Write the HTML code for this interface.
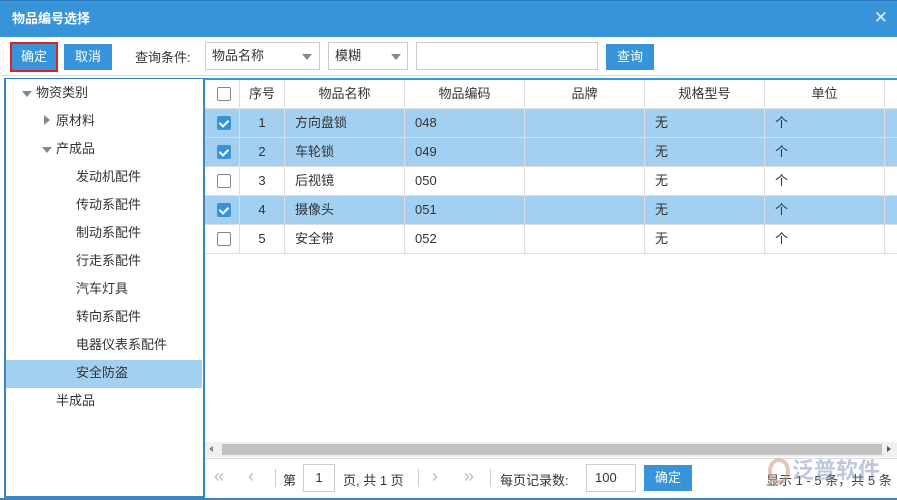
<!DOCTYPE html>
<html><head><meta charset="utf-8"><style>
*{margin:0;padding:0;box-sizing:border-box}
body{width:897px;height:500px;overflow:hidden;background:#fff;font-family:"Liberation Sans","Noto Sans CJK SC",sans-serif;font-size:13px;color:#333;position:relative}
.a{position:absolute}
.title{left:0;top:0;width:897px;height:37px;background:#3794d8;color:#fff;font-weight:bold;font-size:13px;line-height:36px;padding-left:12px;border-top:1px solid #2a7cc0}
.btn{background:#3794d8;color:#fff;text-align:center;line-height:26px;height:26px}
.sel{border:1px solid #ccc;height:28px;line-height:26px;padding-left:6px;background:#fff}
.tri{position:absolute;width:0;height:0;border-left:5px solid transparent;border-right:5px solid transparent;border-top:6px solid #777}
.tree div{position:absolute;height:28px;line-height:28px}
.grid{left:205px;top:78px;width:692px;height:365px;border-top:2px solid #3794d8}
.row{position:absolute;left:0;width:692px;height:29px;border-bottom:1px solid #ddd}
.row span{position:absolute;top:0;height:28px;line-height:28px;border-right:1px solid #ddd}
.cb{position:absolute;left:12px;top:7px;width:14px;height:14px;border:1px solid #888;background:#fff;border-radius:2px}
.cb.on{background:#3794d8;border-color:#3794d8}
.cb.on::after{content:"";position:absolute;left:3px;top:1px;width:4px;height:7px;border:solid #fff;border-width:0 2px 2px 0;transform:rotate(45deg)}
.hl{background:#a3d0f1}
.pg{color:#bbb;font-size:18px}
</style></head><body>
<div class="a title">物品编号选择</div>
<div class="a" style="right:9px;top:8px;color:#d8ecfa;font-size:17px">✕</div>
<div class="a btn" style="left:12px;top:44px;width:44px;outline:2px solid #e02020;outline-offset:0">确定</div>
<div class="a btn" style="left:64px;top:44px;width:48px">取消</div>
<div class="a" style="left:135px;top:47px">查询条件:</div>
<div class="a sel" style="left:205px;top:42px;width:115px">物品名称<div class="tri" style="left:96px;top:11px;border-top-color:#888"></div></div>
<div class="a sel" style="left:328px;top:42px;width:80px">模糊<div class="tri" style="left:62px;top:11px;border-top-color:#888"></div></div>
<div class="a sel" style="left:416px;top:42px;width:182px"></div>
<div class="a btn" style="left:606px;top:44px;width:48px">查询</div>
<div class="a" style="left:0;top:75px;width:897px;height:1px;background:#ddd"></div>
<div class="a" style="left:4px;top:78px;width:201px;height:420px;border:2px solid #3a86c4;border-top:1px solid #3a86c4"></div>
<div class="a hl" style="left:6px;top:360px;width:196px;height:28px"></div>
<div class="tree">
<div class="tri" style="left:22px;top:91px;border-top-color:#888"></div>
<div style="left:36px;top:79px">物资类别</div>
<div style="left:44px;top:115px;width:0;height:0;border-top:5px solid transparent;border-bottom:5px solid transparent;border-left:6px solid #888"></div>
<div style="left:56px;top:107px">原材料</div>
<div class="tri" style="left:42px;top:147px;border-top-color:#888"></div>
<div style="left:56px;top:135px">产成品</div>
<div style="left:76px;top:163px">发动机配件</div>
<div style="left:76px;top:191px">传动系配件</div>
<div style="left:76px;top:219px">制动系配件</div>
<div style="left:76px;top:247px">行走系配件</div>
<div style="left:76px;top:275px">汽车灯具</div>
<div style="left:76px;top:303px">转向系配件</div>
<div style="left:76px;top:331px">电器仪表系配件</div>
<div style="left:76px;top:359px">安全防盗</div>
<div style="left:56px;top:387px">半成品</div>
</div>
<div class="a grid">
<div class="row" style="top:0;background:#fff">
<span style="left:0;width:35px"><i class="cb" style="top:7px"></i></span>
<span style="left:35px;width:45px;text-align:center">序号</span>
<span style="left:80px;width:120px;text-align:center">物品名称</span>
<span style="left:200px;width:120px;text-align:center">物品编码</span>
<span style="left:320px;width:120px;text-align:center">品牌</span>
<span style="left:440px;width:120px;text-align:center">规格型号</span>
<span style="left:560px;width:120px;text-align:center">单位</span>
</div>
<div class="row hl" style="top:29px"><span style="left:0;width:35px"><i class="cb on"></i></span><span style="left:35px;width:45px;text-align:center">1</span><span style="left:80px;width:120px;padding-left:10px">方向盘锁</span><span style="left:200px;width:120px;padding-left:10px">048</span><span style="left:320px;width:120px"></span><span style="left:440px;width:120px;padding-left:10px">无</span><span style="left:560px;width:120px;padding-left:10px">个</span></div>
<div class="row hl" style="top:58px"><span style="left:0;width:35px"><i class="cb on"></i></span><span style="left:35px;width:45px;text-align:center">2</span><span style="left:80px;width:120px;padding-left:10px">车轮锁</span><span style="left:200px;width:120px;padding-left:10px">049</span><span style="left:320px;width:120px"></span><span style="left:440px;width:120px;padding-left:10px">无</span><span style="left:560px;width:120px;padding-left:10px">个</span></div>
<div class="row" style="top:87px"><span style="left:0;width:35px"><i class="cb"></i></span><span style="left:35px;width:45px;text-align:center">3</span><span style="left:80px;width:120px;padding-left:10px">后视镜</span><span style="left:200px;width:120px;padding-left:10px">050</span><span style="left:320px;width:120px"></span><span style="left:440px;width:120px;padding-left:10px">无</span><span style="left:560px;width:120px;padding-left:10px">个</span></div>
<div class="row hl" style="top:116px"><span style="left:0;width:35px"><i class="cb on"></i></span><span style="left:35px;width:45px;text-align:center">4</span><span style="left:80px;width:120px;padding-left:10px">摄像头</span><span style="left:200px;width:120px;padding-left:10px">051</span><span style="left:320px;width:120px"></span><span style="left:440px;width:120px;padding-left:10px">无</span><span style="left:560px;width:120px;padding-left:10px">个</span></div>
<div class="row" style="top:145px"><span style="left:0;width:35px"><i class="cb"></i></span><span style="left:35px;width:45px;text-align:center">5</span><span style="left:80px;width:120px;padding-left:10px">安全带</span><span style="left:200px;width:120px;padding-left:10px">052</span><span style="left:320px;width:120px"></span><span style="left:440px;width:120px;padding-left:10px">无</span><span style="left:560px;width:120px;padding-left:10px">个</span></div>
</div>
<div class="a" style="left:205px;top:442px;width:692px;height:15px;background:#f0f0f0"></div>
<div class="a" style="left:222px;top:444px;width:660px;height:11px;background:#c1c1c1"></div>
<div class="a" style="left:209px;top:446px;border-top:3px solid transparent;border-bottom:3px solid transparent;border-right:4px solid #888"></div>
<div class="a" style="left:887px;top:446px;border-top:3px solid transparent;border-bottom:3px solid transparent;border-left:4px solid #555"></div>
<div class="a" style="left:205px;top:458px;width:692px;height:1px;background:#ddd"></div>
<div class="a pg" style="left:214px;top:466px">«</div>
<div class="a pg" style="left:248px;top:466px">‹</div>
<div class="a" style="left:275px;top:469px;width:1px;height:18px;background:#ccc"></div>
<div class="a" style="left:283px;top:470px">第</div>
<div class="a" style="left:303px;top:464px;width:32px;height:28px;border:1px solid #ccc;text-align:center;line-height:26px">1</div>
<div class="a" style="left:343px;top:470px">页, 共 1 页</div>
<div class="a" style="left:418px;top:469px;width:1px;height:18px;background:#ccc"></div>
<div class="a pg" style="left:432px;top:466px">›</div>
<div class="a pg" style="left:464px;top:466px">»</div>
<div class="a" style="left:490px;top:469px;width:1px;height:18px;background:#ccc"></div>
<div class="a" style="left:500px;top:470px">每页记录数:</div>
<div class="a" style="left:586px;top:464px;width:50px;height:28px;border:1px solid #ccc;line-height:26px;padding-left:8px">100</div>
<div class="a btn" style="left:644px;top:465px;width:48px;height:26px">确定</div>
<div class="a" style="left:766px;top:470px;color:#444">显示 1 - 5 条，共 5 条</div>
<div class="a" style="left:768px;top:458px;width:22px;height:26px;border-radius:50%;border:4px solid #c98a80;opacity:.5"></div>
<div class="a" style="left:792px;top:453px;color:#6a86b0;font-size:22px;font-weight:bold;opacity:.45">泛普软件</div>
<div class="a" style="left:0;top:498px;width:897px;height:2px;background:#3a86c4"></div>
</body></html>
